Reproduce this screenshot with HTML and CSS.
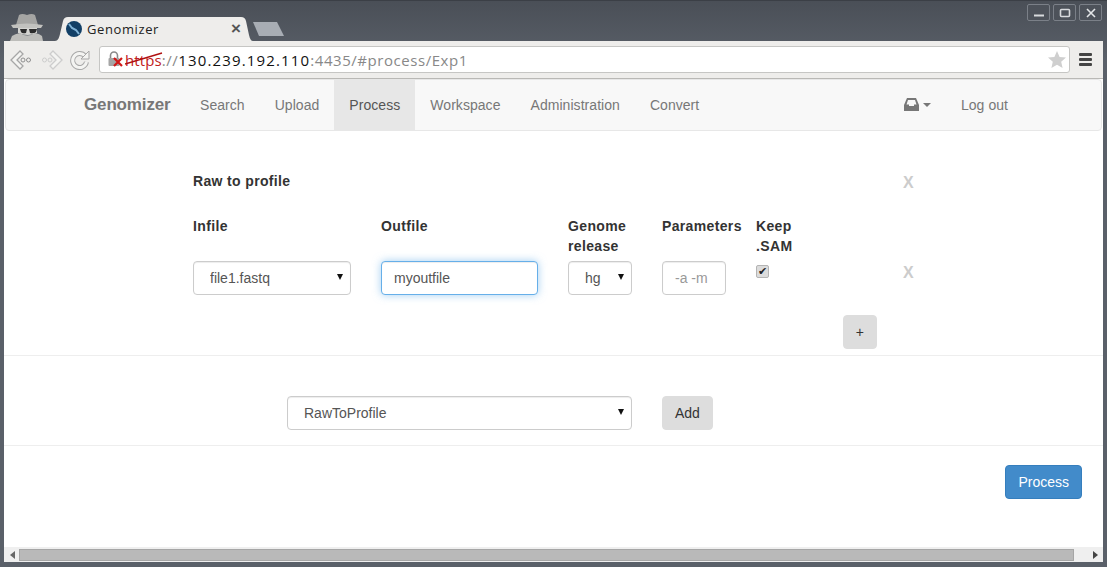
FILE: index.html
```html
<!DOCTYPE html>
<html lang="en">
<head>
  <meta charset="UTF-8">
  <title>Genomizer</title>
  <link rel="stylesheet" href="styles.css">
</head>
<body>
  <div class="window">
    <div class="titlebar">
      <svg class="spy" width="34" height="28" viewBox="0 0 34 28">
        <path d="M6 12 L9 2 Q12 0 17 2 Q22 0 25 2 L28 12 Z" fill="#a5a5a3"/>
        <path d="M1 12 Q17 9 33 12 L31 15 H3 Z" fill="#c2c2bf"/>
        <path d="M8 15 H27 V20 Q18 24 8 20 Z" fill="#d4d4d1"/>
        <path d="M10 16 H17 L16 20 Q12 21 11 19 Z M19 16 H27 L26 19 Q24 21 20 20 Z" fill="#2c2c2c"/>
        <path d="M0 28 L2 23 Q5 21 10 20 Q17 25 25 20 Q30 21 32 23 L33 28 Z" fill="#bdbdba"/>
      </svg>
      <div class="tab">
        <svg class="favicon" width="16" height="16" viewBox="0 0 16 16">
          <circle cx="8" cy="8" r="8" fill="#123f66"/>
          <path d="M3 3 L6 7 L10 9 L13 13" stroke="#7fb2d6" stroke-width="2" fill="none"/>
        </svg>
        <span class="tab-title">Genomizer</span>
        <span class="tab-close">×</span>
      </div>
      <div class="new-tab"></div>
      <div class="win-controls">
        <div class="win-btn"><svg width="12" height="10" viewBox="0 0 12 10"><path d="M1 7.5 H11" stroke="#d8dadd" stroke-width="2"/></svg></div>
        <div class="win-btn"><svg width="12" height="10" viewBox="0 0 12 10"><rect x="1.5" y="1.5" width="9" height="7" rx="1" fill="none" stroke="#d8dadd" stroke-width="1.6"/></svg></div>
        <div class="win-btn"><svg width="12" height="10" viewBox="0 0 12 10"><path d="M2 1 L10 9 M10 1 L2 9" stroke="#e4e6e8" stroke-width="1.6"/></svg></div>
      </div>
    </div>

    <div class="toolbar">
      <svg class="tool-icon back" width="22" height="20" viewBox="0 0 22 20">
        <path d="M10 1 L1 10 L10 19 L13 16 L7 10 L13 4 Z" fill="#f4f4f2" stroke="#a6a6a6" stroke-width="1.3"/>
        <circle cx="13" cy="10" r="2" fill="none" stroke="#8f8f8f"/>
        <circle cx="18.5" cy="10" r="2" fill="none" stroke="#8f8f8f"/>
      </svg>
      <svg class="tool-icon forward" width="22" height="20" viewBox="0 0 22 20">
        <path d="M12 1 L21 10 L12 19 L9 16 L15 10 L9 4 Z" fill="#f4f4f2" stroke="#cdcdcd" stroke-width="1.3"/>
        <circle cx="9" cy="10" r="2" fill="none" stroke="#cdcdcd"/>
        <circle cx="3.5" cy="10" r="2" fill="none" stroke="#cdcdcd"/>
      </svg>
      <svg class="tool-icon reload" width="20" height="20" viewBox="0 0 20 20">
        <path d="M15 6 A7 7 0 1 0 16.5 12" fill="none" stroke="#a8a8a8" stroke-width="5"/>
        <path d="M15 6 A7 7 0 1 0 16.5 12" fill="none" stroke="#f4f4f2" stroke-width="3"/>
        <path d="M11 9 H19 V1 Z" fill="#f4f4f2" stroke="#a8a8a8"/>
      </svg>
      <div class="omnibox">
        <svg class="lock" width="17" height="17" viewBox="0 0 17 17">
          <path d="M3.5 7 V4.5 A3.5 3.5 0 0 1 10.5 4.5 V7" fill="none" stroke="#8a8a8a" stroke-width="1.6"/>
          <rect x="1.5" y="7" width="11" height="8" rx="1" fill="#a5a5a5"/>
          <path d="M7 7 L15 15 M15 7 L7 15" stroke="#d01818" stroke-width="2.2"/>
        </svg>
        <span class="url">
          <span class="url-scheme">https<svg class="url-strike" width="38" height="14" viewBox="0 0 38 14"><path d="M0 12 L37 1" stroke="#b01010" stroke-width="1.4"/></svg></span><span class="url-dim">://</span><span class="url-host">130.239.192.110</span><span class="url-dim">:4435/#process/Exp1</span>
        </span>
        <svg class="star" width="18" height="17" viewBox="0 0 18 17"><path d="M9 0 L11.6 5.9 L18 6.5 L13.2 10.8 L14.6 17 L9 13.8 L3.4 17 L4.8 10.8 L0 6.5 L6.4 5.9 Z" fill="#cfcfcf"/></svg>
      </div>
      <div class="menu-icon"><span></span><span></span><span></span></div>
    </div>

    <div class="page">
      <nav class="navbar">
        <a class="brand">Genomizer</a>
        <a class="nav-link">Search</a>
        <a class="nav-link">Upload</a>
        <a class="nav-link active">Process</a>
        <a class="nav-link">Workspace</a>
        <a class="nav-link">Administration</a>
        <a class="nav-link">Convert</a>
        <a class="nav-link inbox">
          <svg width="15" height="13" viewBox="0 0 15 13"><path d="M3 0 H12 L15 7 V13 H0 V7 Z" fill="#777"/><path d="M4 2 H11 L12.5 6.5 H10 V8 H5 V6.5 H2.5 Z" fill="#f8f8f8"/></svg>
          <span class="caret"></span>
        </a>
        <a class="nav-link logout">Log out</a>
      </nav>

      <section class="process-block">
        <div class="block-head">
          <strong>Raw to profile</strong>
          <span class="remove">X</span>
        </div>
        <div class="file-row labels">
          <label class="col-infile">Infile</label>
          <label class="col-outfile">Outfile</label>
          <label class="col-genome">Genome release</label>
          <label class="col-params">Parameters</label>
          <label class="col-keep">Keep .SAM</label>
        </div>
        <div class="file-row">
          <div class="select-wrap col-infile"><select class="form-control"><option>file1.fastq</option></select></div>
          <input class="form-control col-outfile focused" type="text" value="myoutfile">
          <div class="select-wrap col-genome"><select class="form-control"><option>hg</option></select></div>
          <input class="form-control col-params" type="text" placeholder="-a -m">
          <div class="col-keep"><input class="keep-check" type="checkbox" checked></div>
          <span class="remove">X</span>
        </div>
        <div class="add-file"><button class="btn">+</button></div>
      </section>

      <section class="add-block">
        <div class="select-wrap process-select"><select class="form-control"><option>RawToProfile</option></select></div>
        <button class="btn">Add</button>
      </section>

      <section class="submit-block">
        <button class="btn btn-primary">Process</button>
      </section>
    </div>

    <div class="scrollbar">
      <span class="arrow left"></span>
      <div class="thumb"></div>
      <span class="arrow right"></span>
    </div>
  </div>
</body>
</html>
```

FILE: styles.css
```css
* {
  box-sizing: border-box;
}

html, body {
  margin: 0;
  height: 100%;
  overflow: hidden;
}

body {
  font-family: "Liberation Sans", Arial, sans-serif;
  font-size: 14px;
  color: #333;
}

.window {
  width: 1107px;
  height: 567px;
  display: flex;
  flex-direction: column;
  padding: 0 4px 5px;
  background: linear-gradient(#4a4f57, #5a6069 60px);
  border-top: 1px solid #3b3f46;
}

/* title bar and tabs */
.titlebar {
  height: 40px;
  display: flex;
  align-items: flex-end;
  flex-shrink: 0;
}

.spy {
  margin-left: 6px;
  margin-right: 11px;
}

.tab {
  width: 198px;
  height: 24px;
  background: #eeedeb;
  clip-path: path("M0 24 C3 24 4 21 5 17 L8 4 C9 1 10 0 13 0 L186 0 C189 0 190 1 191 4 L194 18 C195 22 196 24 198 24 Z");
  display: flex;
  align-items: center;
  padding: 0 12px 0 11px;
}

.favicon {
  flex-shrink: 0;
}

.tab-title {
  margin-left: 5px;
  font-family: "Open Sans", sans-serif;
  font-size: 13px;
  letter-spacing: 0.6px;
  color: #222;
  flex: 1;
}

.tab-close {
  font-size: 17px;
  font-weight: bold;
  color: #555;
}

.new-tab {
  width: 31px;
  height: 14px;
  margin-bottom: 5px;
  background: #a8adb4;
  clip-path: polygon(0 0, 24px 0, 31px 100%, 6px 100%);
}

.win-controls {
  margin-left: auto;
  align-self: flex-start;
  display: flex;
  gap: 3px;
  margin-top: 3px;
  margin-right: 1px;
}

.win-btn {
  width: 23px;
  height: 17px;
  border: 1px solid #7b8088;
  border-radius: 2px;
  background: #4d525a;
  display: flex;
  align-items: center;
  justify-content: center;
}

/* browser toolbar */
.toolbar {
  height: 38px;
  flex-shrink: 0;
  background: #eeedeb;
  border-bottom: 1px solid #b9b8b5;
  display: flex;
  align-items: center;
  padding-left: 6px;
}

.tool-icon {
  flex-shrink: 0;
}

.back {
  margin-right: 9px;
}

.forward {
  margin-right: 7px;
}

.reload {
  margin-right: 9px;
}

.omnibox {
  width: 971px;
  height: 27px;
  background: #fff;
  border: 1px solid #c6c6c4;
  border-radius: 3px;
  display: flex;
  align-items: center;
  padding: 0 3px 0 7px;
}

.url {
  margin-left: 1px;
  font-family: "Open Sans", sans-serif;
  font-size: 15px;
  letter-spacing: 0.55px;
  white-space: nowrap;
  flex: 1;
}

.url-scheme {
  position: relative;
  color: #c02020;
  letter-spacing: 0.1px;
}

.url-strike {
  position: absolute;
  left: 0;
  top: 2px;
}

.url-dim {
  color: #888;
}

.url-host {
  color: #111;
  letter-spacing: 1.15px;
}

.menu-icon {
  margin-left: 9px;
  width: 13px;
  display: flex;
  flex-direction: column;
  gap: 2px;
}

.menu-icon span {
  height: 3px;
  border-radius: 1px;
  background: #444;
}

/* page */
.page {
  flex: 1;
  background: #fff;
  position: relative;
  overflow: hidden;
}

.navbar {
  height: 52px;
  margin: 0 1px;
  background: #f8f8f8;
  border: 1px solid #e7e7e7;
  border-radius: 4px;
  display: flex;
  padding-left: 78px;
  line-height: 20px;
}

.brand {
  width: 101px;
  font-size: 17px;
  letter-spacing: -0.15px;
  font-weight: bold;
  color: #777;
  padding: 15px 0;
}

.nav-link {
  color: #777;
  padding: 15px;
  letter-spacing: 0.05px;
}

.nav-link.active {
  background: #e7e7e7;
  color: #555;
}

.inbox {
  margin-left: auto;
  display: flex;
  align-items: center;
  gap: 4px;
  padding-top: 14px;
}

.caret {
  width: 0;
  height: 0;
  border: 4px solid transparent;
  border-top-color: #777;
  border-bottom: 0;
}

.logout {
  margin-right: 78px;
}

.process-block {
  padding: 40px 0 6px 189px;
  border-bottom: 1px solid #eee;
  height: 225px;
}

.block-head {
  display: flex;
  justify-content: space-between;
  width: 721px;
  height: 20px;
  line-height: 20px;
  letter-spacing: 0.35px;
}

.block-head .remove {
  margin-top: 2px;
}

.file-row {
  display: flex;
  gap: 30px;
  align-items: flex-start;
}

.labels {
  margin-top: 25px;
  height: 45px;
  font-weight: bold;
  line-height: 20px;
  letter-spacing: 0.35px;
}

.col-infile { width: 158px; }
.col-outfile { width: 157px; }
.col-genome { width: 64px; }
.col-params { width: 64px; }
.col-keep { width: 40px; }

.labels .col-params {
  white-space: nowrap;
}

.file-row .remove {
  margin-left: 77px;
  margin-top: 2px;
}

.remove {
  font-size: 16px;
  font-weight: bold;
  color: #ccc;
  line-height: 20px;
}

.form-control {
  height: 34px;
  padding: 6px 12px;
  font-family: inherit;
  font-size: 14px;
  color: #555;
  background: #fff;
  border: 1px solid #ccc;
  border-radius: 4px;
  box-shadow: inset 0 1px 1px rgba(0, 0, 0, 0.075);
}

.form-control::placeholder {
  color: #999;
}

.select-wrap {
  position: relative;
}

.select-wrap select {
  appearance: none;
  width: 100%;
  padding-left: 16px;
}

/* the little black arrow of a native select */
.select-wrap::after {
  content: "";
  position: absolute;
  top: 13px;
  right: 8px;
  border: 3px solid transparent;
  border-top: 6px solid #111;
  border-bottom: 0;
}

.focused {
  border-color: #66afe9;
  box-shadow: inset 0 1px 1px rgba(0, 0, 0, 0.075), 0 0 8px rgba(102, 175, 233, 0.6);
}

.keep-check {
  appearance: none;
  display: block;
  width: 13px;
  height: 13px;
  margin: 4px 0 0;
  background: #dcdcdc;
  border: 1px solid #b4b4b4;
  border-radius: 2px;
  font-size: 11px;
  line-height: 11px;
  text-align: center;
  color: #222;
}

.keep-check::before {
  content: "✔";
  font-family: "DejaVu Sans", sans-serif;
}

.add-file {
  margin-top: 20px;
  width: 684px;
  display: flex;
  justify-content: flex-end;
}

.btn {
  height: 34px;
  padding: 6px 12px;
  font-family: inherit;
  font-size: 14px;
  color: #333;
  background: #ddd;
  border: 1px solid #ddd;
  border-radius: 4px;
}

.add-block {
  height: 90px;
  border-bottom: 1px solid #eee;
  padding: 40px 0 0 283px;
  display: flex;
  gap: 30px;
  align-items: flex-start;
}

.process-select {
  width: 345px;
}

.submit-block {
  display: flex;
  justify-content: flex-end;
  padding: 19px 21px 0 0;
}

.btn-primary {
  color: #fff;
  background: #428bca;
  border-color: #357ebd;
}

/* horizontal scrollbar */
.scrollbar {
  height: 15px;
  flex-shrink: 0;
  background: #efefef;
  display: flex;
  align-items: center;
  padding: 0 5px 0 6px;
}

.thumb {
  flex: 1;
  height: 12px;
  margin: 0 19px 0 4px;
  background: #b9b9b9;
  border: 1px solid #a6a6a6;
}

.arrow {
  width: 0;
  height: 0;
  border: 4px solid transparent;
}

.arrow.left {
  border-right: 5px solid #666;
  border-left: 0;
}

.arrow.right {
  border-left: 5px solid #444;
  border-right: 0;
}
```
